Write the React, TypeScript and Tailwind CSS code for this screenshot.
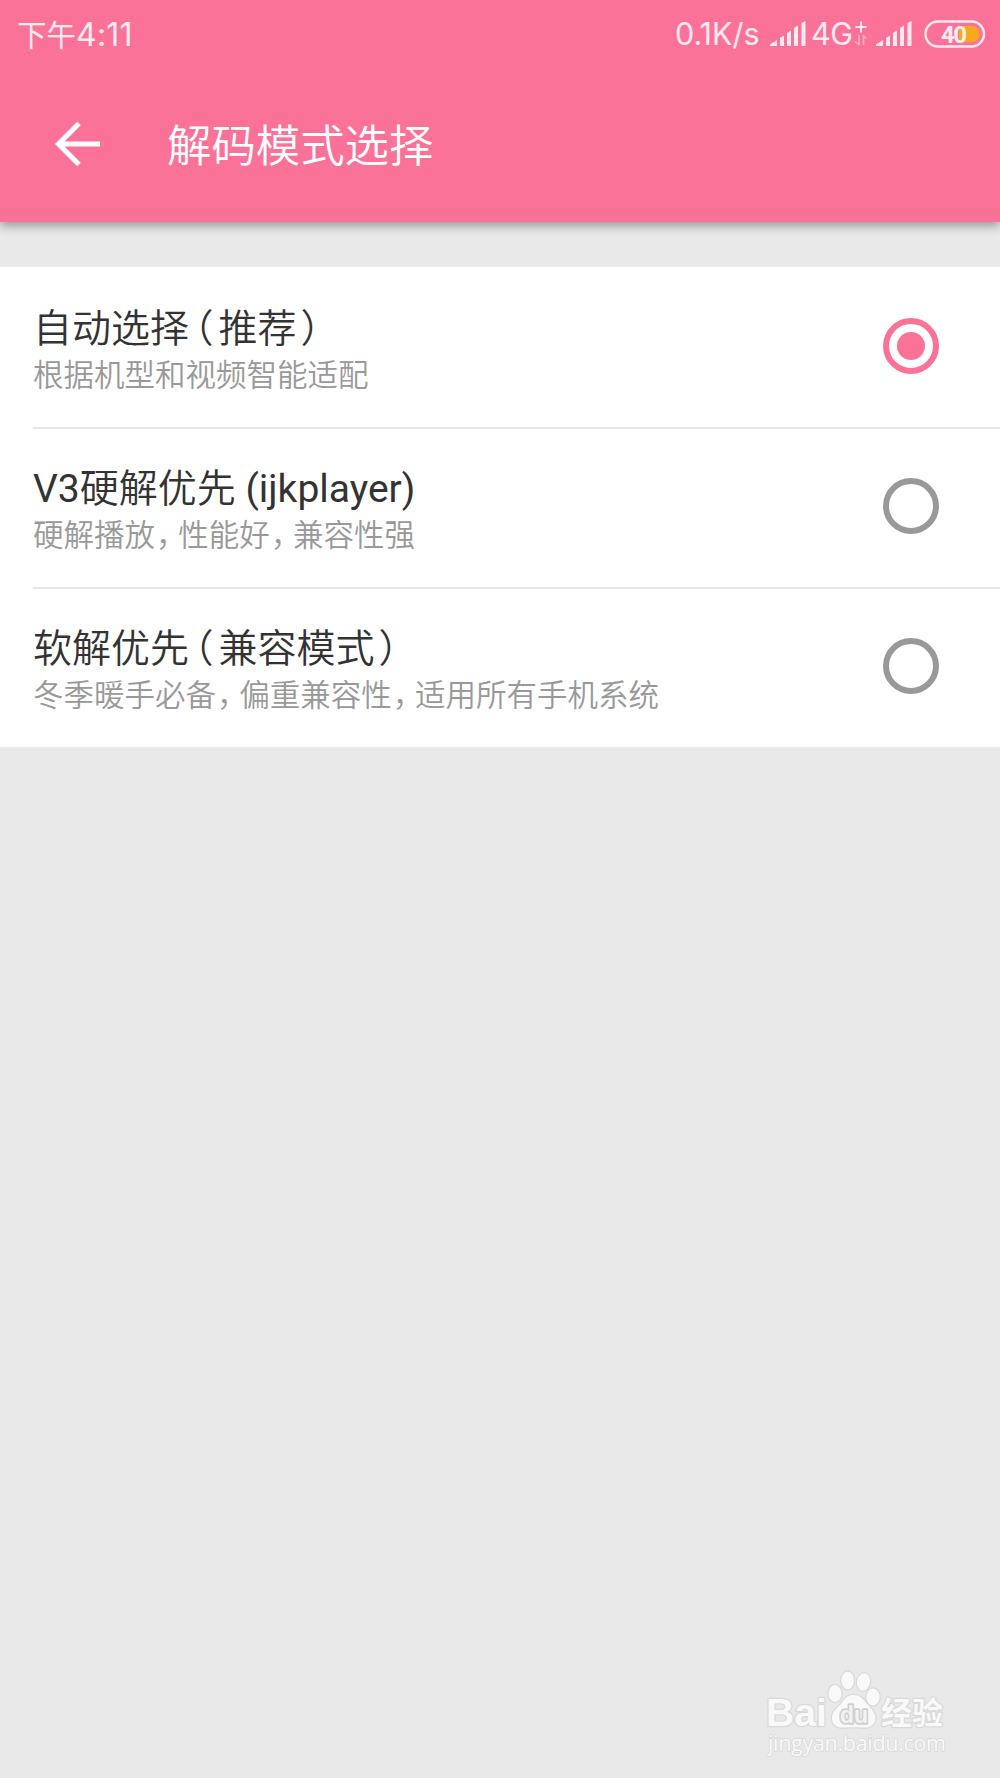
import { useState } from "react"

interface DecodeMode {
  id: string,
  title: string,
  description: string
}

const MODES: DecodeMode[] = [
  { id: "auto", title: "自动选择（推荐）", description: "根据机型和视频智能适配" },
  { id: "hard", title: "V3硬解优先 (ijkplayer)", description: "硬解播放，性能好，兼容性强" },
  { id: "soft", title: "软解优先（兼容模式）", description: "冬季暖手必备，偏重兼容性，适用所有手机系统" },
]

// full width punctuation is too wide by default
const PUNCTUATION: Record<string, string> = {
  "（": "ml-[5px] mr-[5px] [font-feature-settings:'halt']",
  "）": "ml-[4px] [font-feature-settings:'halt']",
  "，": "ml-px mr-[7px] [font-feature-settings:'halt']",
}

const Tight = ({ text }: { text: string }) => (
  <>
    {text.split(/([（），]|[ -~]+)/).map((part, i) => {
      if (PUNCTUATION[part]) return <span key={i} className={PUNCTUATION[part]}>{part}</span>
      // latin looks too thin next to the chinese glyphs
      if (/^[ -~]+$/.test(part)) return <span key={i} className="font-normal">{part}</span>
      return part
    })}
  </>
)

const Signal = () => (
  <svg width="36" height="26" viewBox="0 0 36 26" fill="currentColor">
    <path d="M0 25 L0 23.5 L7 19 V25Z" />
    <path d="M10 25 V17 L14 14.5 V25Z" />
    <path d="M17 25 V12 L21 9.5 V25Z" />
    <path d="M24 25 V7 L28 4.5 V25Z" />
    <path d="M31.5 25 V2 L35.5 0 V25Z" />
  </svg>
)

const StatusBar = () => (
  <div className="flex h-[68px] items-center justify-between pl-[17px] pr-[14px] text-white/85">
    <span className="mt-[2px] whitespace-nowrap text-[30px] leading-none">
      <span className="text-[29.5px]">下午</span>
      <span className="font-['Inter'] text-[32px] tracking-[0.2px]">4:11</span>
    </span>
    <div className="flex items-center">
      <span className="mr-[7px] mt-px w-[88px] whitespace-nowrap font-['Inter'] text-[30.5px] leading-none">0.1K/s</span>
      <Signal />
      <span className="ml-[5px] w-[43px] whitespace-nowrap font-['Inter'] text-[30.5px] leading-none tracking-[-0.5px]">4G</span>
      <svg className="mr-[8px]" width="14" height="28" viewBox="0 0 14 28" fill="none" stroke="currentColor">
        <path d="M7 1.5V12.5M1.5 7H12.5" strokeWidth="2" />
        <path d="M5 15V25M5 25L1 21.5M9.5 25V15M9.5 15.5L12.5 18.5" strokeWidth="1.6" opacity="0.5" />
      </svg>
      <Signal />
      <svg className="-mt-px ml-[12px]" width="62" height="28" viewBox="0 0 62 28">
        <rect x="1.5" y="1.5" width="58.5" height="25" rx="12.5" fill="none" stroke="currentColor" strokeWidth="2.4" />
        <path d="M35 6 H48 A8 8 0 0 1 48 22 H35Z" fill="#f9a822" />
        <text x="17" y="22.5" textLength="26" fill="#fff" fillOpacity="0.9" fontFamily="Roboto" fontWeight="700" fontSize="24">40</text>
      </svg>
    </div>
  </div>
)

interface RadioProps {
  checked: boolean
}
const Radio = ({ checked }: RadioProps) => (
  <span className={`flex size-14 shrink-0 items-center justify-center rounded-full border-[6px] ${checked ? "border-[#fb7299]" : "border-[#999]"}`}>
    {checked && <span className="size-7 rounded-full bg-[#fb7299]" />}
  </span>
)

const Watermark = () => (
  <svg width="190" height="100" viewBox="0 0 190 100" fill="#f9f9f9" stroke="#d8d8d8" strokeWidth="2.4" paintOrder="stroke" strokeLinejoin="round">
    <text x="6" y="60.500" textLength="61" lengthAdjust="spacingAndGlyphs" fontFamily="Liberation Sans" fontWeight="700" fontSize="39" paintOrder="stroke">Bai</text>
    <ellipse cx="75" cy="28.5" rx="6.5" ry="8.5" />
    <ellipse cx="87.7" cy="15.5" rx="6.3" ry="9" />
    <ellipse cx="103.5" cy="17" rx="6.5" ry="8.8" transform="rotate(10 103.5 17)" />
    <ellipse cx="113" cy="32" rx="6.7" ry="8.5" />
    <path d="M93 30C86 30 83.500 36 80 40C75 45 71.500 48 72 54C72.500 60 77 63 83 62.500C89 62 98 62 104 62.500C110 63 115 60 115.500 54C116 48 111 44 108 40C104 35 101 30 93 30Z" />
    <text x="80" y="58" textLength="28" lengthAdjust="spacingAndGlyphs" fill="#f2f2f2" stroke="#cfcfcf" strokeWidth="3.5" fontFamily="Liberation Sans" fontWeight="700" fontSize="24">du</text>
    <text x="121" y="59" textLength="62" lengthAdjust="spacingAndGlyphs" fontFamily="Noto Sans CJK SC" fontWeight="700" fontSize="31">经验</text>
    <text x="8" y="86" textLength="178" fontFamily="Open Sans" fontSize="21.500" strokeWidth="1.6">jingyan.baidu.com</text>
  </svg>
)

export default function App() {
  const [selected, setSelected] = useState("auto")

  return (
    <div className="flex h-[1778px] w-[1000px] flex-col overflow-hidden bg-[#e9e9e9] font-['Roboto','Noto_Sans_CJK_SC',sans-serif]">
      <header className="h-[222px] shrink-0 bg-[#fb7299] shadow-[0_4px_10px_rgba(0,0,0,0.35)]">
        <StatusBar />
        <div className="flex h-[154px] items-center pb-[1px] pl-[54px] text-white">
          <button type="button" aria-label="返回" className="-mt-[1px]">
            <svg width="46" height="46" viewBox="0 0 46 46" fill="none" stroke="currentColor" strokeWidth="5">
              <path d="M46 23H6M25 2.500L4.500 23L25 43.500" />
            </svg>
          </button>
          <h1 className="ml-[67px] mt-[6px] text-[44.4px] font-[350] leading-none">解码模式选择</h1>
        </div>
      </header>

      <div role="radiogroup" className="mt-[45px] bg-white pl-[33px]">
        {MODES.map(mode => (
          <button
            key={mode.id}
            type="button"
            role="radio"
            aria-checked={selected === mode.id}
            onClick={() => setSelected(mode.id)}
            className="flex h-[160px] w-full items-center justify-between border-t-2 border-[#e7e7e7] pb-[4px] pr-[61px] text-left first:border-white"
          >
            <div className="mt-[13px] flex flex-col whitespace-nowrap">
              <span className="h-[47px] text-[39px] font-[350] leading-[47px] text-[#333]"><Tight text={mode.title} /></span>
              <span className="h-[46px] text-[30.5px] font-[350] leading-[46px] text-[#999]"><Tight text={mode.description} /></span>
            </div>
            <Radio checked={selected === mode.id} />
          </button>
        ))}
      </div>

      <footer className="mt-auto flex justify-end pb-[13px] pr-[50px]">
        <Watermark />
      </footer>
    </div>
  )
}
